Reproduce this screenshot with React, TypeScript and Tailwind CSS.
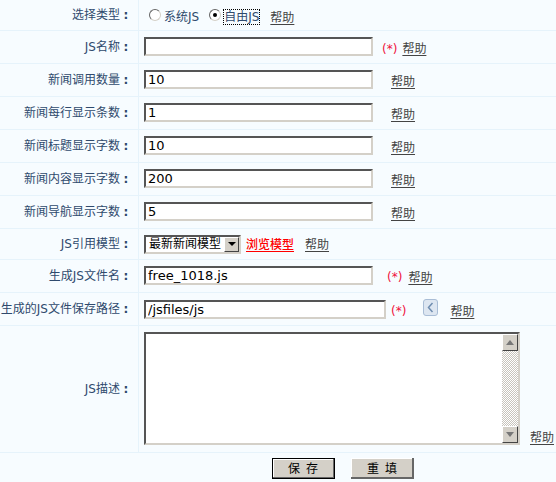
const inputCls =
  'h-[19px] border-2 border-t-[#555] border-l-[#555] border-r-[#d4d0c8] border-b-[#d4d0c8] bg-white px-[2px] pt-[1px] text-[13px] text-black outline-none';

function Help({ className = '' }: { className?: string }) {
  return <a className={`text-[#444] underline underline-offset-2 ${className}`}>帮助</a>;
}

function Star({ className = '' }: { className?: string }) {
  return <span className={`text-[#f0103c] ${className}`}>(*)</span>;
}

function Row({ label, h, children }: { label: string; h: string; children: React.ReactNode }) {
  return (
    <div className={`flex border-b border-[#e6f3fb] ${h}`}>
      <div className="flex w-[139px] shrink-0 items-center justify-end whitespace-nowrap border-r border-[#e6f3fb] pr-[6px]">
        {label}
        <span className="w-[12px] text-center font-bold">:</span>
      </div>
      <div className="flex min-w-0 flex-1 items-center pl-[5px]">{children}</div>
    </div>
  );
}

function Radio({ checked, label, className = '' }: { checked?: boolean; label: string; className?: string }) {
  return (
    <label className={`flex items-center ${className}`}>
      <span className="flex h-[12px] w-[12px] items-center justify-center rounded-full border border-t-[#666] border-l-[#666] border-r-[#d4d0c8] border-b-[#d4d0c8] bg-white">
        {checked && <span className="h-[4px] w-[4px] rounded-full bg-black" />}
      </span>
      <span className={checked ? 'ml-[2px] mt-[3px] border border-dotted border-black leading-[14px]' : 'ml-[3px] mt-[3px] leading-[14px]'}>
        {label}
      </span>
    </label>
  );
}

function ScrollBtn({ down }: { down?: boolean }) {
  return (
    <div className="flex h-[17px] w-[16px] items-center justify-center border border-t-white border-l-white border-r-[#444] border-b-[#444] bg-[#d4d0c8]">
      <svg width="8" height="5" viewBox="0 0 8 5">
        <path d={down ? 'M0 0h8L4 5z' : 'M4 0l4 5H0z'} fill="#777" />
      </svg>
    </div>
  );
}

export default function App() {
  const rows = [
    { label: '新闻调用数量', value: '10' },
    { label: '新闻每行显示条数', value: '1' },
    { label: '新闻标题显示字数', value: '10' },
    { label: '新闻内容显示字数', value: '200' },
    { label: '新闻导航显示字数', value: '5' },
  ];

  return (
    <div className="h-[482px] w-[556px] overflow-hidden bg-[#f7fcff] text-[12px] text-[#2f4a6d] [font-family:'DejaVu_Sans','Noto_Sans_CJK_SC',sans-serif]">
      <Row label="选择类型" h="h-[31px]">
        <Radio label="系统JS" className="ml-[5px]" />
        <Radio checked label="自由JS" className="ml-[10px]" />
        <Help className="ml-[10px] mt-[5px]" />
      </Row>
      <Row label="JS名称" h="h-[33px]">
        <input className={`${inputCls} w-[229px] mb-[1px]`} />
        <Star className="ml-[9px] mt-[3px]" />
        <Help className="ml-[5px] mt-[3px]" />
      </Row>
      {rows.map((row) => (
        <Row key={row.label} label={row.label} h="h-[33px]">
          <input className={`${inputCls} w-[229px] mb-[1px]`} defaultValue={row.value} />
          <Help className="ml-[18px] mt-[4px]" />
        </Row>
      ))}
      <Row label="JS引用模型" h="h-[31px]">
        <div className="flex h-[19px] w-[97px] items-center border-2 border-t-[#555] border-l-[#555] border-r-[#d4d0c8] border-b-[#d4d0c8] bg-white">
          <span className="flex-1 whitespace-nowrap pl-[3px] text-black">最新新闻模型</span>
          <div className="flex h-[15px] w-[15px] items-center justify-center border border-t-white border-l-white border-r-[#444] border-b-[#444] bg-[#d4d0c8]">
            <svg width="8" height="4" viewBox="0 0 8 4">
              <path d="M0 0h8L4 4z" fill="#000" />
            </svg>
          </div>
        </div>
        <a className="ml-[5px] mt-[1px] font-medium text-[#f00] underline underline-offset-2">浏览模型</a>
        <Help className="ml-[11px] mt-[1px]" />
      </Row>
      <Row label="生成JS文件名" h="h-[33px]">
        <input className={`${inputCls} w-[229px] mb-[1px]`} defaultValue="free_1018.js" />
        <Star className="ml-[14px] mt-[2px]" />
        <Help className="ml-[6px] mt-[3px]" />
      </Row>
      <Row label="生成的JS文件保存路径" h="h-[33px]">
        <input className={`${inputCls} w-[242px]`} defaultValue="/jsfiles/js" />
        <Star className="ml-[5px] mt-[3px]" />
        <div className="mb-[3px] ml-[17px] flex h-[17px] w-[15px] items-center justify-center rounded-[3px] border border-[#a9bdd6] bg-[#dde6f1]">
          <svg width="7" height="11" viewBox="0 0 7 11">
            <path d="M5.5 1L1.5 5.5L5.5 10" fill="none" stroke="#6f8db0" strokeWidth="1.5" />
          </svg>
        </div>
        <Help className="ml-[12px] mt-[5px]" />
      </Row>
      <Row label="JS描述" h="h-[127px]">
        <div className="mb-[2px] flex h-[113px] w-[376px] border-2 border-t-[#555] border-l-[#555] border-r-[#d4d0c8] border-b-[#d4d0c8] bg-white">
          <textarea className="min-w-0 flex-1 resize-none overflow-hidden bg-white outline-none" />
          <div className="flex w-[16px] flex-col justify-between bg-[repeating-conic-gradient(#c8c4bc_0_25%,#fff_0_50%)] bg-[length:2px_2px]">
            <ScrollBtn />
            <ScrollBtn down />
          </div>
        </div>
        <Help className="ml-[10px] mt-[97px]" />
      </Row>
      <div className="flex pl-[272px] pt-[5px]">
        <button className="mr-[16px] h-[21px] w-[63px] border border-black bg-[#d4d0c8] text-[12px] tracking-[1px] text-black shadow-[inset_-1px_-1px_0_#666,inset_1px_1px_0_#fff]">
          保 存
        </button>
        <button className="h-[21px] w-[63px] bg-[#d4d0c8] text-[12px] tracking-[1px] text-black shadow-[inset_-2px_-2px_0_#666,inset_1px_1px_0_#fff]">
          重 填
        </button>
      </div>
    </div>
  );
}
